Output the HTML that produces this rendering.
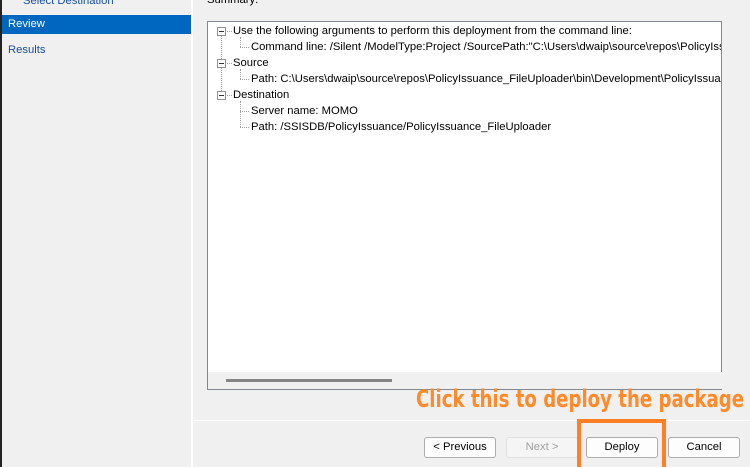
<!DOCTYPE html><html><head><style>
body{margin:0;width:750px;height:467px;background:#f0f0f0;position:relative;overflow:hidden;font-family:"Liberation Sans",sans-serif;font-size:11.25px;color:#000}
.a{position:absolute;white-space:nowrap}
.btn{position:absolute;top:437px;height:21px;width:72px;border:1px solid #adadad;border-radius:3px;background:#fdfdfd;text-align:center;line-height:19px;box-sizing:border-box}
.pm{position:absolute;width:9px;height:9px;border:1px solid #919191;box-sizing:border-box;background:#fff}
.pm:after{content:"";position:absolute;left:1px;top:3px;width:5px;height:1px;background:#333}
.dv{position:absolute;border-left:1px dotted #a0a0a0}
.dh{position:absolute;border-top:1px dotted #a0a0a0}
</style></head><body>
<div class="a" style="left:0;top:0;width:2px;height:467px;background:#222"></div>
<div class="a" style="left:191px;top:0;width:2px;height:467px;background:#fff"></div>
<div class="a" style="left:23px;top:-5px;color:#1a4fa0">Select Destination</div>
<div class="a" style="left:2px;top:15px;width:189px;height:19px;background:#0067c0"></div>
<div class="a" style="left:8px;top:18px;color:#fff">Review</div>
<div class="a" style="left:8px;top:44px;color:#1a4fa0">Results</div>
<div class="a" style="left:207px;top:-6px;color:#000">Summary:</div>
<div class="a" style="left:207px;top:21px;width:515px;height:369px;background:#fff;border:1px solid #828790;box-sizing:border-box"></div>
<div class="a" style="left:208px;top:372px;width:514px;height:17px;background:#f0f0f0"></div>
<div class="a" style="left:226px;top:379px;width:166px;height:3px;background:#858585"></div>
<div class="dv" style="left:221px;top:36px;height:25px"></div>
<div class="dv" style="left:221px;top:68px;height:25px"></div>
<div class="dv" style="left:240px;top:37px;height:10px"></div>
<div class="dv" style="left:240px;top:69px;height:10px"></div>
<div class="dv" style="left:240px;top:101px;height:26px"></div>
<div class="dh" style="left:240px;top:47px;width:9px"></div>
<div class="dh" style="left:240px;top:79px;width:9px"></div>
<div class="dh" style="left:240px;top:111px;width:9px"></div>
<div class="dh" style="left:240px;top:127px;width:9px"></div>
<div class="dh" style="left:227px;top:31px;width:5px"></div>
<div class="dh" style="left:227px;top:63px;width:5px"></div>
<div class="dh" style="left:227px;top:95px;width:5px"></div>
<div class="pm" style="left:217px;top:27px"></div>
<div class="pm" style="left:217px;top:59px"></div>
<div class="pm" style="left:217px;top:91px"></div>
<div class="a" style="left:233px;top:25px">Use the following arguments to perform this deployment from the command line:</div>
<div class="a" style="left:251px;top:41px;width:470px;overflow:hidden">Command line: /Silent /ModelType:Project /SourcePath:"C:\Users\dwaip\source\repos\PolicyIssuance</div>
<div class="a" style="left:233px;top:57px">Source</div>
<div class="a" style="left:251px;top:73px;width:470px;overflow:hidden">Path: C:\Users\dwaip\source\repos\PolicyIssuance_FileUploader\bin\Development\PolicyIssuance</div>
<div class="a" style="left:233px;top:89px">Destination</div>
<div class="a" style="left:251px;top:105px">Server name: MOMO</div>
<div class="a" style="left:251px;top:121px">Path: /SSISDB/PolicyIssuance/PolicyIssuance_FileUploader</div>
<div class="a" style="left:193px;top:420px;width:557px;height:1px;background:#fff"></div>
<div class="a" style="left:416px;top:385px;width:400px;color:#ff8a2a;font-family:'DejaVu Sans Condensed','DejaVu Sans',sans-serif;font-weight:bold;font-size:24px;transform:scaleX(0.84);transform-origin:0 0">Click this to deploy the package</div>
<div class="btn" style="left:424px">&lt; Previous</div>
<div class="btn" style="left:506px;color:#a0a0a0;border-color:#e0e0e0;background:#f5f5f5">Next &gt;</div>
<div class="btn" style="left:586px">Deploy</div>
<div class="btn" style="left:668px">Cancel</div>
<div class="a" style="left:577px;top:419px;width:89px;height:48px;border:4px solid #ff7f27;border-bottom:none;box-sizing:border-box"></div>
</body></html>
